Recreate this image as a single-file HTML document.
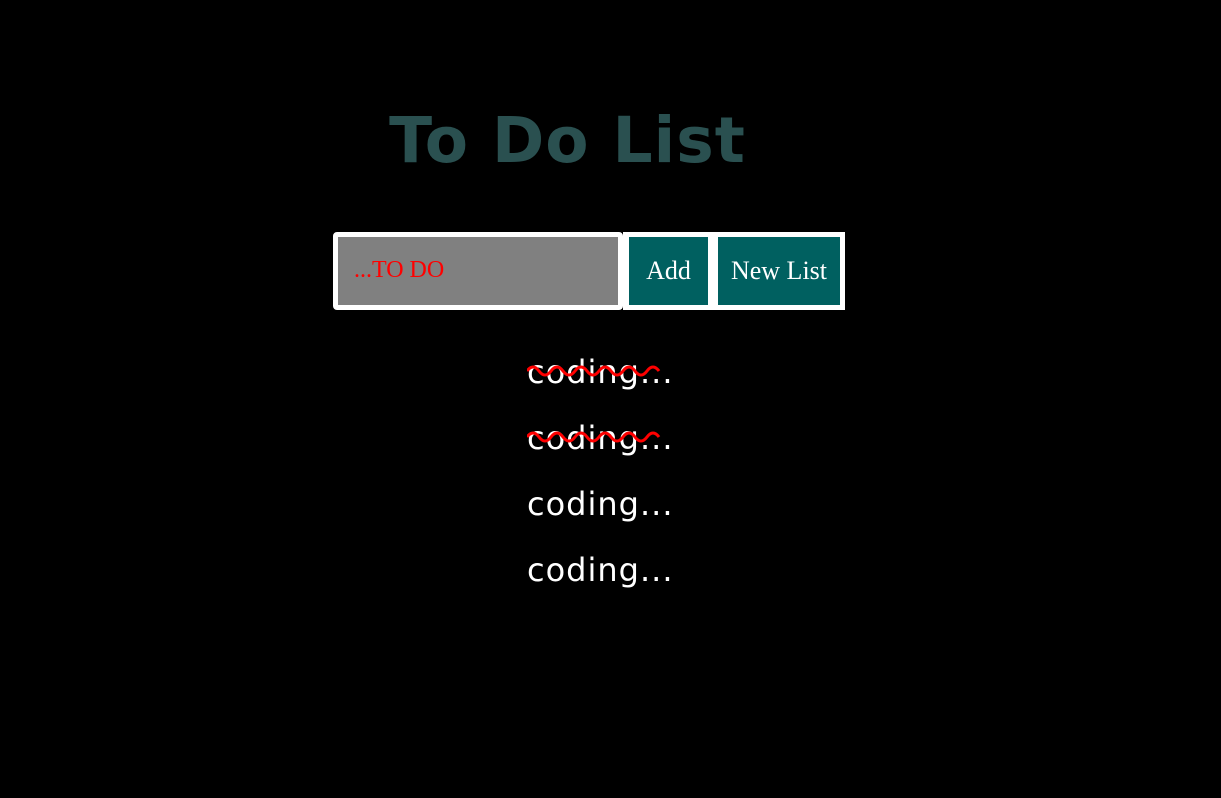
<!DOCTYPE html>
<html><head><style>
body{margin:0;background:#000;width:1221px;height:798px;overflow:hidden;font-family:"Liberation Sans",sans-serif;position:relative}
h1{position:absolute;left:0;width:1221px;top:104px;margin:0;text-align:center;font:bold 63px "Comic Sans MS","DejaVu Sans",sans-serif;color:#2a5050;letter-spacing:1px;transform:translateX(-43px)}
.inp{position:absolute;left:333px;top:232px;width:280px;height:68px;background:#808080;border:5px solid #fff;border-radius:4px}
.inp span{position:absolute;left:16px;top:20px;color:#f00;font:24px "Liberation Serif",serif}
.frame{position:absolute;left:623px;top:232px;width:222px;height:78px;background:#fff}
.btn{position:absolute;top:5px;height:68px;background:#006060;color:#fff;font:26px "Liberation Serif",serif;display:flex;align-items:center;justify-content:center}
.item{position:absolute;left:527px;width:160px;color:#fff;font:32px "Comic Sans MS","DejaVu Sans",sans-serif;letter-spacing:1px}
svg{position:absolute;left:527px}
</style></head><body>
<h1>To Do List</h1>
<div class="inp"><span>...TO DO</span></div>
<div class="frame">
<div class="btn" style="left:6px;width:79px">Add</div>
<div class="btn" style="left:95px;width:122px">New List</div>
</div>
<div class="item" style="top:353px">coding...</div>
<div class="item" style="top:419px">coding...</div>
<div class="item" style="top:485px">coding...</div>
<div class="item" style="top:551px">coding...</div>
<svg style="top:360px" width="135" height="20"><path d="M0 11 Q6 3 12 11 T24 11 T36 11 T48 11 T60 11 T72 11 T84 11 T96 11 T108 11 T120 11 T132 11" stroke="#f00" stroke-width="3" fill="none"/></svg>
<svg style="top:426px" width="135" height="20"><path d="M0 11 Q6 3 12 11 T24 11 T36 11 T48 11 T60 11 T72 11 T84 11 T96 11 T108 11 T120 11 T132 11" stroke="#f00" stroke-width="3" fill="none"/></svg>
</body></html>
